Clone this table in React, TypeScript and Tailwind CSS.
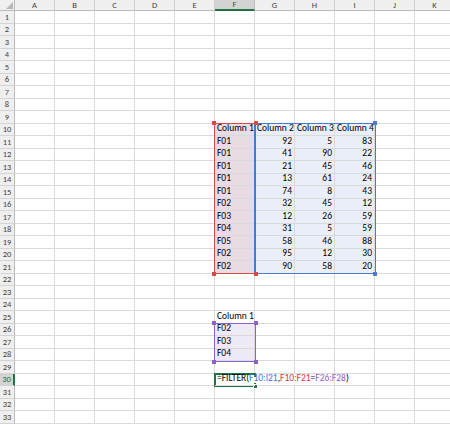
import React from "react";

const COLS = ["A", "B", "C", "D", "E", "F", "G", "H", "I", "J", "K"];
const ROWS = Array.from({ length: 33 }, (_, i) => i + 1);

const data: [string, number, number, number][] = [
  ["F01", 92, 5, 83],
  ["F01", 41, 90, 22],
  ["F01", 21, 45, 46],
  ["F01", 13, 61, 24],
  ["F01", 74, 8, 43],
  ["F02", 32, 45, 12],
  ["F03", 12, 26, 59],
  ["F04", 31, 5, 59],
  ["F05", 58, 46, 88],
  ["F02", 95, 12, 30],
  ["F02", 90, 58, 20],
];

type Cell = { text?: React.ReactNode; align?: "left" | "right"; bg?: string };

function getCell(r: number, c: string): Cell {
  if (r === 10) {
    const m: Record<string, string> = { F: "Column 1", G: "Column 2", H: "Column 3", I: "Column 4" };
    if (m[c]) return { text: m[c], bg: c === "F" ? "bg-[#e8dbe4]" : "bg-[#e9eef8]" };
  }
  if (r >= 11 && r <= 21) {
    const d = data[r - 11];
    if (c === "F") return { text: d[0], bg: "bg-[#e8dbe4]" };
    if (c === "G") return { text: String(d[1]), align: "right", bg: "bg-[#e9eef8]" };
    if (c === "H") return { text: String(d[2]), align: "right", bg: "bg-[#e9eef8]" };
    if (c === "I") return { text: String(d[3]), align: "right", bg: "bg-[#e9eef8]" };
  }
  if (r === 25 && c === "F") return { text: "Column 1" };
  if (c === "F" && r >= 26 && r <= 28) {
    return { text: ["F02", "F03", "F04"][r - 26], bg: "bg-[#eee9f5]" };
  }
  if (r === 30 && c === "F") {
    return {
      bg: "bg-transparent",
      text: (
        <span>
          =FILTER(<span className="text-[#3f76d2]">F10:I21</span>,
          <span className="text-[#d63b3b]">F10:F21</span>=
          <span className="text-[#8c62c8]">F26:F28</span>)
        </span>
      ),
    };
  }
  return {};
}

function Square({ cls }: { cls: string }) {
  return <div className={"absolute w-[4px] h-[4px] " + cls} />;
}

export default function App() {
  return (
    <div
      className="relative w-[450px] h-[425px] overflow-hidden bg-white text-black"
      style={{ fontFamily: "Calibri, Carlito, Lato, 'Liberation Sans', sans-serif" }}
    >
      <div className="grid grid-cols-[15px_repeat(11,40px)] grid-rows-[11px_repeat(33,12.5px)] w-[455px]">
        {/* corner */}
        <div className="relative bg-[#efefef] border-r border-b border-[#bcbcbc]">
          <div className="absolute right-[1px] bottom-[1px] w-0 h-0 border-l-[7px] border-l-transparent border-b-[7px] border-b-[#b8b8b8]" />
        </div>
        {COLS.map((c) => (
          <div
            key={c}
            className={
              "flex items-center justify-center text-[8.5px] leading-none border-r " +
              (c === "F"
                ? "bg-[#d3d3d3] text-[#2e5e3e] border-r-[#bcbcbc] border-b-2 border-b-[#217346]"
                : "bg-[#efefef] text-[#444] border-r-[#d0d0d0] border-b border-b-[#bcbcbc]")
            }
          >
            {c}
          </div>
        ))}
        {ROWS.map((r) => (
          <React.Fragment key={r}>
            <div
              className={
                "flex items-center justify-center text-[8.5px] leading-none border-b border-b-[#d4d4d4] " +
                (r === 30
                  ? "bg-[#d3d3d3] text-[#217346] border-r-2 border-r-[#217346]"
                  : "bg-[#efefef] text-[#444] border-r border-r-[#bcbcbc]")
              }
            >
              {r}
            </div>
            {COLS.map((c) => {
              const cell = getCell(r, c);
              const active = r === 30 && c === "F";
              const overflowed = r === 30 && (c === "F" || c === "G");
              return (
                <div
                  key={c}
                  className={
                    "flex items-end pb-[1.5px] whitespace-nowrap text-[9.5px] leading-none px-[2px] border-b border-[#dadada] " +
                    (overflowed ? "border-r-0 " : "border-r ") +
                    (cell.align === "right" ? "justify-end " : "justify-start ") +
                    (cell.bg ?? "bg-white") +
                    (active ? " relative z-20 overflow-visible" : " overflow-hidden")
                  }
                >
                  {cell.text}
                </div>
              );
            })}
          </React.Fragment>
        ))}
      </div>

      {/* blue range G10:I21 */}
      <div className="absolute left-[254px] top-[123px] w-[122px] h-[151px] border-[1.5px] border-[#4a7bd0] pointer-events-none" />
      <Square cls="left-[373px] top-[121px] bg-[#4a7bd0]" />
      <Square cls="left-[373px] top-[272px] bg-[#4a7bd0]" />
      {/* red range F10:F21 */}
      <div className="absolute left-[214px] top-[123px] w-[42px] h-[151px] border-[1.5px] border-[#d84a4a] pointer-events-none" />
      <Square cls="left-[212px] top-[121px] bg-[#d84a4a]" />
      <Square cls="left-[254px] top-[121px] bg-[#d84a4a]" />
      <Square cls="left-[212px] top-[272px] bg-[#d84a4a]" />
      <Square cls="left-[254px] top-[272px] bg-[#d84a4a]" />
      {/* purple range F26:F28 */}
      <div className="absolute left-[214px] top-[323px] w-[42px] h-[39px] border-[1.5px] border-[#8c62c8] pointer-events-none" />
      <Square cls="left-[212px] top-[321px] bg-[#8c62c8]" />
      <Square cls="left-[254px] top-[321px] bg-[#8c62c8]" />
      <Square cls="left-[212px] top-[360px] bg-[#8c62c8]" />
      <Square cls="left-[254px] top-[360px] bg-[#8c62c8]" />
      {/* active cell F30: right edge broken where the text runs over it */}
      <div className="absolute z-10 left-[214px] top-[373px] w-[42px] h-[14px] flex border-l-2 border-t-2 border-b-2 border-[#217346] pointer-events-none">
        <div className="flex-1" />
        <div className="w-[2px] flex flex-col justify-between">
          <div className="h-[2px] bg-[#217346]" />
          <div className="h-[2px] bg-[#217346]" />
        </div>
      </div>
      <div className="absolute z-10 left-[253px] top-[384px] w-[5px] h-[5px] bg-[#217346] border border-white" />
    </div>
  );
}
